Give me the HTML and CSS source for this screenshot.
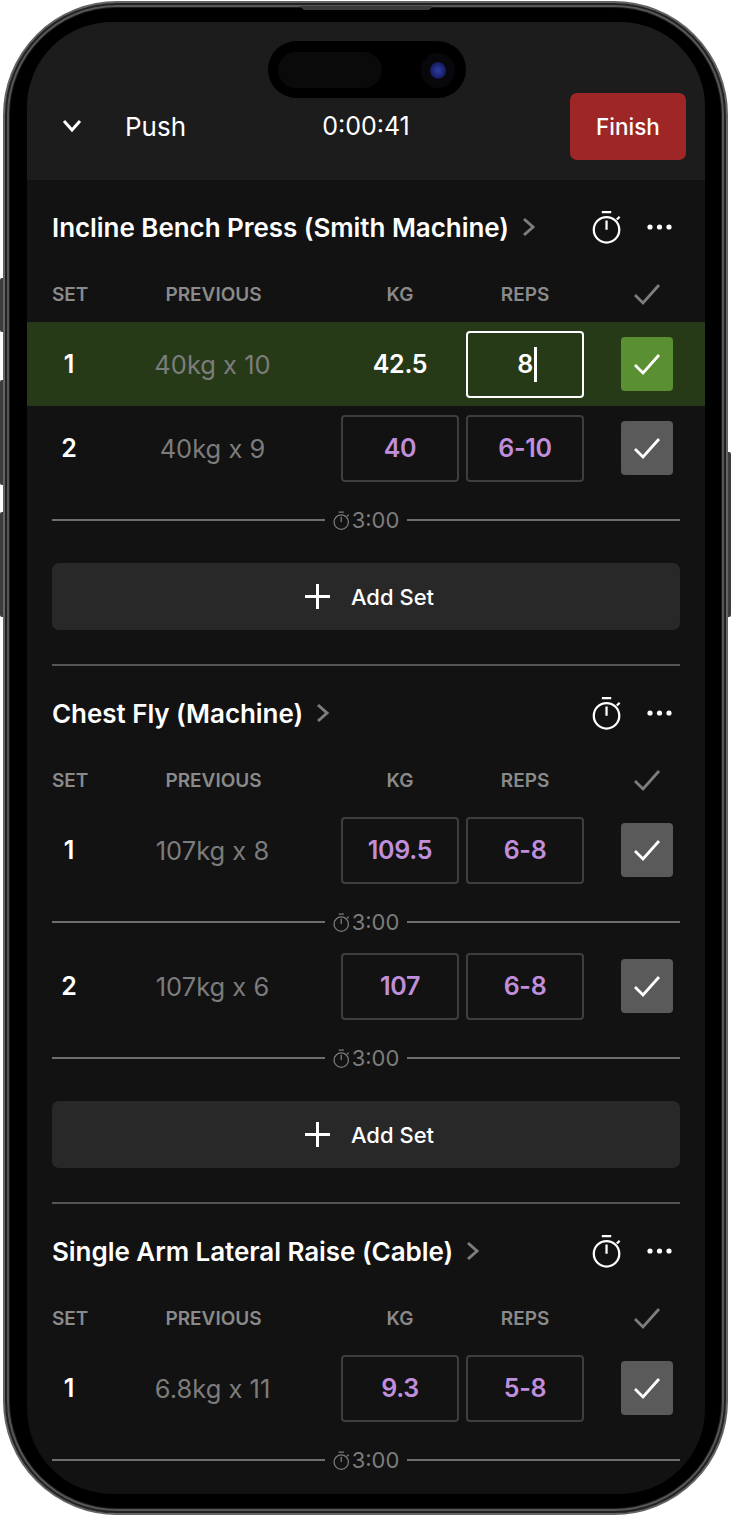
FILE: index.html
```html
<!DOCTYPE html>
<html lang="en">
<head>
    <meta charset="UTF-8">
    <meta name="viewport" content="width=device-width, initial-scale=1.0">
    <title>Workout - Push</title>
    <link rel="stylesheet" href="styles.css">
</head>
<body>
    <svg class="defs" width="0" height="0">
        <symbol id="check" viewBox="0 0 28 24"><path d="M2 13 L10 21 L26 3" fill="none" stroke="currentColor" stroke-width="2.8"/></symbol>
        <symbol id="watch" viewBox="0 0 32 36"><path d="M10.5 2 H20.5 M15.5 11 V21 M26.5 10 L29.5 7" fill="none" stroke="currentColor" stroke-width="2.4"/><circle cx="15.5" cy="21" r="13.6" fill="none" stroke="currentColor" stroke-width="2.4"/></symbol>
        <symbol id="more" viewBox="0 0 25 6"><circle cx="3" cy="3" r="2.6" fill="currentColor"/><circle cx="12.5" cy="3" r="2.6" fill="currentColor"/><circle cx="22" cy="3" r="2.6" fill="currentColor"/></symbol>
        <symbol id="chev" viewBox="0 0 14 20"><path d="M2 2 L11 10 L2 18" fill="none" stroke="currentColor" stroke-width="3"/></symbol>
    </svg>

    <div class="phone">
        <span class="side-btn left b1"></span>
        <span class="side-btn left b2"></span>
        <span class="side-btn left b3"></span>
        <span class="side-btn right b4"></span>
        <span class="speaker"></span>

        <div class="screen">
            <!-- Dynamic island -->
            <div class="island">
                <span class="island-sensor"></span>
                <span class="island-lens"></span>
            </div>

            <!-- Top bar -->
            <div class="topbar">
                <svg class="down" viewBox="0 0 20 14"><path d="M2 2 L10 11 L18 2" fill="none" stroke="currentColor" stroke-width="3"/></svg>
                <div class="workout-name">Push</div>
                <div class="elapsed">0:00:41</div>
                <button class="finish">Finish</button>
            </div>

            <div class="content">
                <!-- Exercise 1 -->
                <section class="exercise">
                    <div class="ex-head">
                        <span class="ex-title">Incline Bench Press (Smith Machine)</span>
                        <svg class="ex-chev"><use href="#chev"/></svg>
                        <svg class="ex-watch"><use href="#watch"/></svg>
                        <svg class="ex-more"><use href="#more"/></svg>
                    </div>
                    <div class="row labels">
                        <span>SET</span><span>PREVIOUS</span><span>KG</span><span>REPS</span>
                        <svg class="label-check"><use href="#check"/></svg>
                    </div>
                    <div class="row set active">
                        <span class="set-no">1</span>
                        <span class="prev">40kg x 10</span>
                        <span class="cell filled">42.5</span>
                        <span class="cell focused">8<i class="caret"></i></span>
                        <span class="tick done"><svg><use href="#check"/></svg></span>
                    </div>
                    <div class="row set">
                        <span class="set-no">2</span>
                        <span class="prev">40kg x 9</span>
                        <span class="cell">40</span>
                        <span class="cell">6-10</span>
                        <span class="tick"><svg><use href="#check"/></svg></span>
                    </div>
                    <div class="rest"><span class="rest-time"><svg><use href="#watch"/></svg>3:00</span></div>
                    <button class="add-set"><span class="plus"></span>Add Set</button>
                </section>

                <!-- Exercise 2 -->
                <section class="exercise">
                    <div class="ex-head">
                        <span class="ex-title">Chest Fly (Machine)</span>
                        <svg class="ex-chev"><use href="#chev"/></svg>
                        <svg class="ex-watch"><use href="#watch"/></svg>
                        <svg class="ex-more"><use href="#more"/></svg>
                    </div>
                    <div class="row labels">
                        <span>SET</span><span>PREVIOUS</span><span>KG</span><span>REPS</span>
                        <svg class="label-check"><use href="#check"/></svg>
                    </div>
                    <div class="row set">
                        <span class="set-no">1</span>
                        <span class="prev">107kg x 8</span>
                        <span class="cell">109.5</span>
                        <span class="cell">6-8</span>
                        <span class="tick"><svg><use href="#check"/></svg></span>
                    </div>
                    <div class="rest"><span class="rest-time"><svg><use href="#watch"/></svg>3:00</span></div>
                    <div class="row set">
                        <span class="set-no">2</span>
                        <span class="prev">107kg x 6</span>
                        <span class="cell">107</span>
                        <span class="cell">6-8</span>
                        <span class="tick"><svg><use href="#check"/></svg></span>
                    </div>
                    <div class="rest"><span class="rest-time"><svg><use href="#watch"/></svg>3:00</span></div>
                    <button class="add-set"><span class="plus"></span>Add Set</button>
                </section>

                <!-- Exercise 3 -->
                <section class="exercise">
                    <div class="ex-head">
                        <span class="ex-title">Single Arm Lateral Raise (Cable)</span>
                        <svg class="ex-chev"><use href="#chev"/></svg>
                        <svg class="ex-watch"><use href="#watch"/></svg>
                        <svg class="ex-more"><use href="#more"/></svg>
                    </div>
                    <div class="row labels">
                        <span>SET</span><span>PREVIOUS</span><span>KG</span><span>REPS</span>
                        <svg class="label-check"><use href="#check"/></svg>
                    </div>
                    <div class="row set">
                        <span class="set-no">1</span>
                        <span class="prev">6.8kg x 11</span>
                        <span class="cell">9.3</span>
                        <span class="cell">5-8</span>
                        <span class="tick"><svg><use href="#check"/></svg></span>
                    </div>
                    <div class="rest"><span class="rest-time"><svg><use href="#watch"/></svg>3:00</span></div>
                </section>
            </div>
        </div>
    </div>
</body>
</html>
```

FILE: styles.css
```css
/* General Styles */
* {
    box-sizing: border-box;
    margin: 0;
    padding: 0;
    font-family: Inter, "Liberation Sans", sans-serif;
}
body {
    background-color: #ffffff;
    width: 732px;
    height: 1516px;
    overflow: hidden;
}
.defs {
    position: absolute;
}

/* Device frame */
.phone {
    position: relative;
    width: 725px;
    height: 1514px;
    margin: 1px 0 0 3px;
    padding: 19px 21px 19px 22px;
    background-color: #000;
    border: 2px solid #646464;
    border-radius: 114px;
    box-shadow: inset 0 0 0 2px #222, inset 0 0 0 4px #565656, inset 0 0 0 5px #1a1a1a;
}
.side-btn {
    position: absolute;
    width: 3px;
    background-color: #3c3c3c;
}
.side-btn.left {
    left: -5px;
    border-radius: 2px 0 0 2px;
}
.side-btn.right {
    right: -5px;
    border-radius: 0 2px 2px 0;
}
.b1 { top: 275px; height: 54px; }
.b2 { top: 377px; height: 105px; }
.b3 { top: 509px; height: 105px; }
.b4 { top: 449px; height: 165px; }

.speaker {
    position: absolute;
    top: 3px;
    left: 295px;
    width: 133px;
    height: 4px;
    background-color: #3a3a3a;
    clip-path: polygon(0 0, 100% 0, 97% 100%, 3% 100%);
}

.screen {
    position: relative;
    height: 100%;
    background-color: #121212;
    border-radius: 85px;
    overflow: hidden;
    color: #fff;
}
.island {
    position: absolute;
    top: 19px;
    left: 241px;
    width: 198px;
    height: 57px;
    background-color: #000;
    border-radius: 29px;
}
.island-sensor {
    position: absolute;
    top: 11px;
    left: 10px;
    width: 104px;
    height: 36px;
    background-color: #0a0a0a;
    border-radius: 18px;
}
.island-lens {
    position: absolute;
    top: 21px;
    left: 162px;
    width: 16px;
    height: 17px;
    background: radial-gradient(circle, #2f3d9c 0%, #1a2370 55%, #0b1030 100%);
    border-radius: 50%;
    box-shadow: 0 0 0 9px #08080c;
}

/* Top bar */
.topbar {
    display: flex;
    align-items: center;
    height: 158px;
    padding: 71px 19px 20px 35px;
    background-color: #1c1c1c;
}
.down {
    width: 20px;
    height: 14px;
    margin-right: 43px;
    margin-bottom: 1px;
}
.workout-name {
    width: 197px;
    margin-bottom: 1px;
    font-size: 26px;
    font-weight: 400;
}
.elapsed {
    width: 88px;
    margin-bottom: 1px;
    font-size: 25px;
    text-align: center;
}
.finish {
    margin-left: auto;
    width: 116px;
    height: 67px;
    background-color: #9e2626;
    border: none;
    border-radius: 7px;
    color: #fff;
    font-size: 22.5px;
    font-weight: 500;
}

/* Exercise */
.exercise {
    padding: 27px 25px 0;
}
.ex-head {
    display: flex;
    align-items: center;
    height: 40px;
    margin-bottom: 25px;
}
.ex-title {
    font-size: 26px;
    font-weight: 600;
    letter-spacing: -0.05px;
}
.ex-chev {
    width: 14px;
    height: 20px;
    margin-left: 13px;
    color: #7d7d7d;
}
.ex-watch {
    width: 30px;
    height: 34px;
    margin-left: auto;
    margin-right: 25px;
}
.ex-more {
    width: 25px;
    height: 6px;
    margin-right: 8px;
}

/* Table rows */
.row {
    display: grid;
    grid-template-columns: 34px 241px 118px 118px 1fr;
    column-gap: 7px;
    align-items: center;
    text-align: center;
}
.labels {
    height: 44px;
    margin-bottom: 6px;
    color: #8a8a8a;
    font-size: 19px;
    font-weight: 600;
}
.labels span:first-child {
    width: 36px;
}
.label-check {
    justify-self: end;
    width: 28px;
    height: 24px;
    margin-right: 19px;
    color: #7d7d7d;
}
.set {
    height: 84px;
}
.set.active {
    margin: 0 -25px;
    padding: 0 25px;
    background-color: #273a18;
}
.set-no {
    font-size: 25px;
    font-weight: 600;
}
.prev {
    padding-right: 2px;
    color: #7c7c7c;
    font-size: 25.5px;
}
.cell {
    display: flex;
    align-items: center;
    justify-content: center;
    height: 67px;
    border: 2px solid #3e3e3e;
    border-radius: 4px;
    color: #c08fdc;
    font-size: 25px;
    font-weight: 600;
    letter-spacing: -0.3px;
}
.cell.filled {
    border: none;
    color: #fff;
}
.cell.focused {
    padding-left: 4px;
    border-color: #fff;
    color: #fff;
}
.caret {
    width: 3px;
    height: 35px;
    margin-left: 1px;
    background-color: #fff;
}
.tick {
    justify-self: end;
    display: flex;
    align-items: center;
    justify-content: center;
    width: 52px;
    height: 54px;
    margin-right: 7px;
    background-color: #5a5a5a;
    border-radius: 4px;
}
.tick.done {
    background-color: #5a9032;
}
.tick svg {
    width: 28px;
    height: 24px;
}

/* Rest timer divider */
.rest {
    display: flex;
    align-items: center;
    height: 22px;
    margin: 19px 0 11px;
}
.rest::before,
.rest::after {
    content: "";
    flex: 1;
    height: 2px;
    background-color: #6e6e6e;
}
.rest-time {
    display: flex;
    align-items: center;
    justify-content: center;
    width: 82px;
    color: #7c7c7c;
    font-size: 22px;
}
.rest-time svg {
    width: 17px;
    height: 19px;
    margin-right: 2px;
}

/* Add set */
.add-set {
    display: flex;
    align-items: center;
    justify-content: center;
    width: 100%;
    height: 67px;
    margin-top: 32px;
    padding-left: 7px;
    background-color: #282828;
    border: none;
    border-radius: 7px;
    color: #fff;
    font-size: 22px;
    font-weight: 500;
}
.plus {
    width: 25px;
    height: 25px;
    margin-right: 21px;
    background:
        linear-gradient(#fff, #fff) center / 100% 3px no-repeat,
        linear-gradient(#fff, #fff) center / 3px 100% no-repeat;
}
.exercise:not(:last-child)::after {
    content: "";
    display: block;
    height: 2px;
    margin-top: 34px;
    background-color: #555;
}
```
